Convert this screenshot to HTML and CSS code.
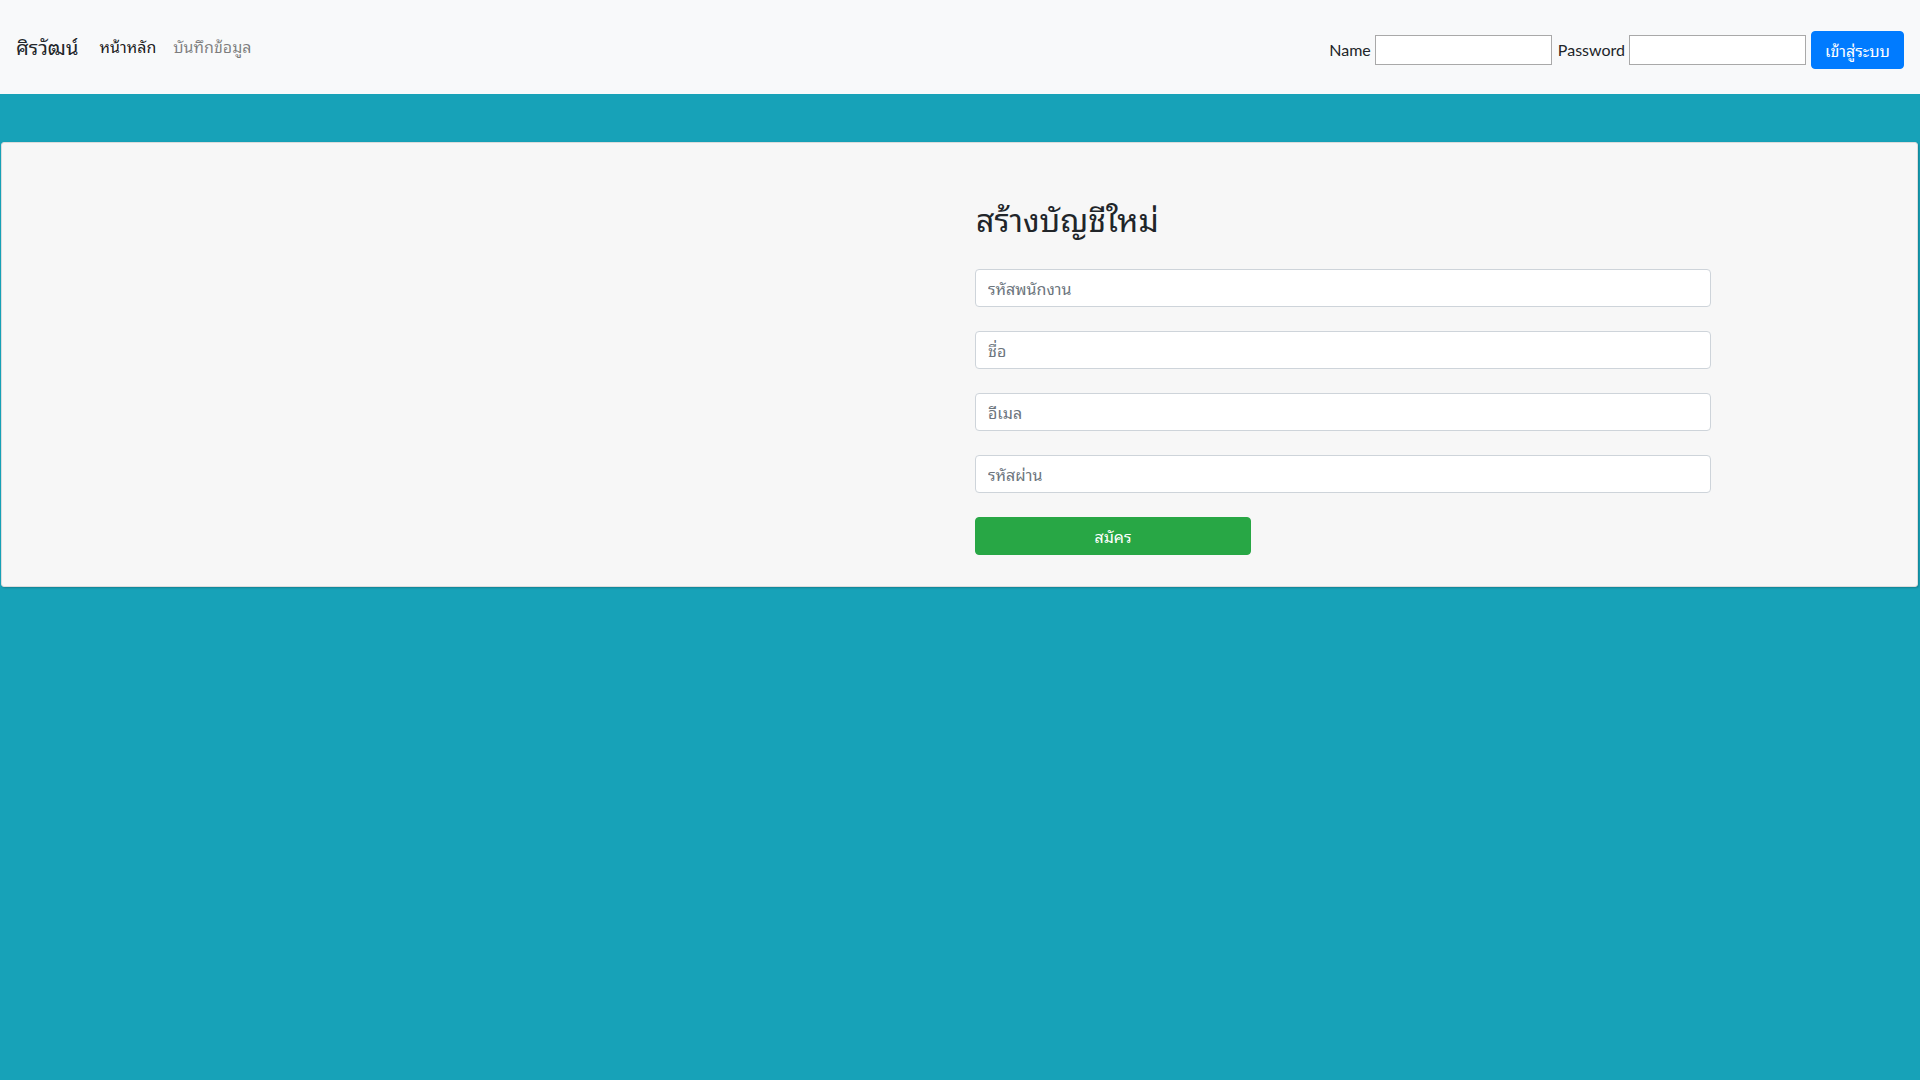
FILE: index.html
```html
<!DOCTYPE html>
<html lang="th">
<head>
<meta charset="utf-8">
<title>ศิรวัฒน์</title>
<link rel="stylesheet" href="styles.css">
</head>
<body>
<nav class="navbar">
  <div class="nav-left">
    <a class="brand" href="#">ศิรวัฒน์</a>
    <a class="nav-link active" href="#">หน้าหลัก</a>
    <a class="nav-link" href="#">บันทึกข้อมูล</a>
  </div>
  <form class="login">
    <label class="login-label">Name</label>
    <input class="login-input" type="text">
    <label class="login-label">Password</label>
    <input class="login-input" type="password">
    <button class="btn-login" type="button">เข้าสู่ระบบ</button>
  </form>
</nav>
<main class="card">
  <div class="col-left"></div>
  <div class="col-right">
    <h2 class="title">สร้างบัญชีใหม่</h2>
    <form class="signup">
      <input class="field" type="text" placeholder="รหัสพนักงาน">
      <input class="field" type="text" placeholder="ชื่อ">
      <input class="field" type="email" placeholder="อีเมล">
      <input class="field" type="password" placeholder="รหัสผ่าน">
      <button class="btn-signup" type="button">สมัคร</button>
    </form>
  </div>
</main>
</body>
</html>
```
FILE: styles.css
```css
* { box-sizing: border-box; }
html, body { margin: 0; padding: 0; }
body {
  background: #17a2b8;
  font-family: "Lato", "Noto Sans Thai Looped", "Noto Sans Thai", "Noto Sans", sans-serif;
  font-size: 16px;
  color: #212529;
  min-height: 1080px;
}
.navbar {
  height: 94px;
  background: #f8f9fa;
  display: flex;
  align-items: center;
  justify-content: space-between;
  padding: 0 16px;
}
.nav-left {
  display: flex;
  align-items: center;
  padding-bottom: 2px;
}
.brand {
  font-size: 20px;
  color: #212529;
  text-decoration: none;
  margin-right: 21px;
}
.nav-link {
  font-size: 16px;
  color: rgba(0,0,0,.5);
  text-decoration: none;
  margin-right: 17px;
}
.nav-link.active { color: rgba(0,0,0,.9); }
.login {
  display: flex;
  align-items: center;
  margin: 0;
  padding-top: 5px;
}
.login-label {
  font-size: 16px;
  color: #212529;
  margin-right: 4px;
}
.login-input {
  width: 177px;
  height: 30px;
  border: 1px solid #a9a9a9;
  background: #fff;
  margin: 0 6px 0 0;
  padding: 0 4px;
  font-size: 14px;
}
.login-input:last-of-type { margin-right: 5px; }
.btn-login {
  width: 93px;
  height: 38px;
  border: 1px solid #007bff;
  background: #007bff;
  color: #fff;
  font-family: inherit;
  font-size: 16px;
  border-radius: 4px;
  padding: 0;
  cursor: pointer;
}
.card {
  margin: 48px 2px 0 1px;
  background: #f7f7f7;
  border: 1px solid #dcdcdc;
  border-radius: 3px;
  box-shadow: 1px 1px 2px rgba(0,0,0,.2);
  display: flex;
  height: 445px;
}
.col-left { flex: 0 0 958px; }
.col-right {
  flex: 1;
  padding: 58px 15px 0 15px;
}
.title {
  margin: 0 0 30px 1px;
  font-size: 32px;
  font-weight: 400;
  line-height: 38px;
  color: #212529;
}
.signup {
  display: flex;
  flex-direction: column;
  align-items: flex-start;
  gap: 24px;
  margin: 0;
}
.field {
  width: 736px;
  height: 38px;
  border: 1px solid #ced4da;
  border-radius: 4px;
  background: #fff;
  padding: 6px 12px;
  font-family: inherit;
  font-size: 16px;
  color: #495057;
}
.field::placeholder { color: #6c757d; }
.btn-signup {
  margin-top: 0;
  width: 276px;
  height: 38px;
  border: 1px solid #28a745;
  background: #28a745;
  color: #fff;
  font-family: inherit;
  font-size: 16px;
  border-radius: 4px;
  cursor: pointer;
}
```
